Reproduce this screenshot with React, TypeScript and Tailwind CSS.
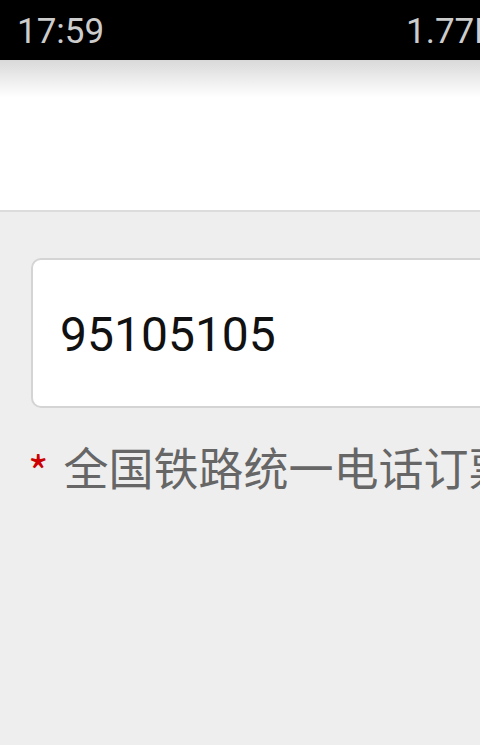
export default function App() {
  return (
    <div className="w-[480px] h-[745px] overflow-hidden bg-[#eeeeee] font-['Roboto','Noto_Sans_CJK_SC',sans-serif]">
      {/* status bar */}
      <div className="h-[60px] bg-black flex items-center justify-between pl-[17px] whitespace-nowrap">
        <span className="text-[35px] leading-none text-[#cccccc] pt-[2px]">17:59</span>
        <span className="text-[35px] leading-none text-[#cccccc] pt-[2px] w-[74px] overflow-hidden">1.77K</span>
      </div>

      {/* title bar */}
      <div className="h-[152px] bg-white border-b-2 border-[#dcdcdc] bg-gradient-to-b from-[#d9d9d9] via-white via-[25%] to-white" />

      {/* content */}
      <div className="pl-[31px] pt-[46px] w-[760px]">
        <div className="h-[150px] w-[660px] bg-white border-2 border-[#d4d4d4] rounded-[10px] flex items-center pl-[27px]">
          <span className="text-[48px] leading-none text-[#111111] pt-[4px]">95105105</span>
        </div>
        <div className="mt-[32px] flex items-center whitespace-nowrap font-['Noto_Sans_CJK_SC',sans-serif]">
          <span className="text-[44px] leading-none text-[#cc0000] -ml-[3px] pt-[8px]">*</span>
          <span className="text-[45px] leading-none text-[#666666] ml-[15px]">全国铁路统一电话订票</span>
        </div>
      </div>
    </div>
  );
}
